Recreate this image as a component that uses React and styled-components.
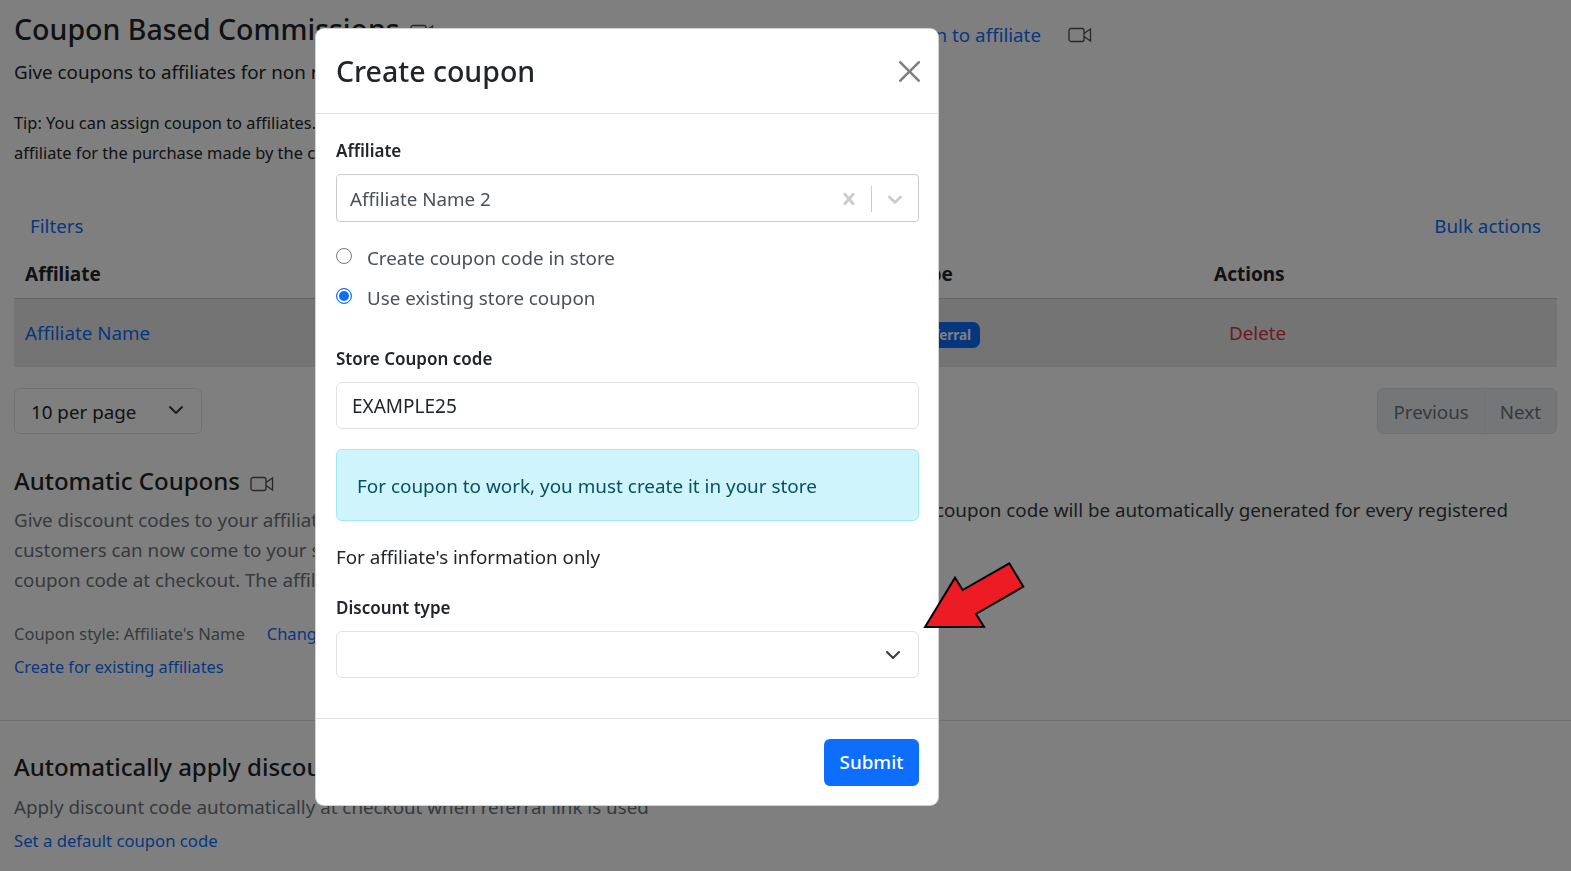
import React from "react";
import styled, { createGlobalStyle } from "styled-components";

const GlobalStyle = createGlobalStyle`
  html, body {
    margin: 0;
    padding: 0;
    height: 100%;
    background: #fff;
    overflow: hidden;
  }
  body {
    font-family: "Noto Sans", "Open Sans", sans-serif;
    font-size: 18.8px;
    line-height: 30px;
    color: #212529;
  }
  * { box-sizing: border-box; }
`;

const Page = styled.div`
  width: 1571px;
  height: 871px;
  padding: 9px 14px 0;
  overflow: hidden;
`;

const TopRow = styled.div`
  display: flex;
  justify-content: space-between;
  align-items: center;
  padding-right: 465px;
  height: 40px;
`;

const Title = styled.h1`
  display: flex;
  align-items: center;
  gap: 10px;
  margin: 0;
  font-weight: 500;
  font-size: ${(p) => p.$size || 28.5}px;
  line-height: 40px;
  white-space: nowrap;
  svg {
    margin-top: 6px;
  }
`;

const Link = styled.a`
  color: #0d6efd;
  white-space: nowrap;
  font-size: ${(p) => p.$size || 18.8}px;
`;

const LinkWithIcon = styled.div`
  display: flex;
  align-items: center;
  gap: 27px;
  margin-top: 11px;
`;

const Lead = styled.p`
  margin: 8px 0 0;
  white-space: nowrap;
`;

const Tip = styled.p`
  margin: 21px 0 0;
  font-size: 16.4px;
  white-space: nowrap;
`;

const TableActions = styled.div`
  display: flex;
  justify-content: space-between;
  padding: 0 16px;
  margin-top: 43px;
`;

const Table = styled.table`
  width: 100%;
  margin-top: 9px;
  border-collapse: collapse;
  table-layout: fixed;
`;

const Th = styled.th`
  text-align: left;
  font-weight: 700;
  height: 48px;
  padding: 0 11px;
  font-size: 19px;
  border-bottom: 1px solid #c9c9c9;
`;

const Td = styled.td`
  height: 68px;
  padding: 2px 11px 0;
  background: #e9e9e9;
  border-bottom: 1px solid #dee2e6;
`;

const Badge = styled.span`
  display: inline-block;
  margin-top: -1px;
  background: #0d6efd;
  color: #fff;
  font-size: 13.5px;
  font-weight: 700;
  line-height: 26px;
  padding: 0 9px;
  border-radius: 7px;
`;

const DeleteBtn = styled.a`
  color: #dc3545;
  padding-left: 15px;
`;

const PagerRow = styled.div`
  display: flex;
  justify-content: space-between;
  margin-top: 21px;
`;

const PerPage = styled.div`
  display: flex;
  align-items: center;
  justify-content: space-between;
  width: 188px;
  height: 46px;
  padding: 2px 17px 0 16px;
  border: 1px solid #dee2e6;
  border-radius: 6px;
  svg {
    margin-top: -4px;
  }
`;

const PagerGroup = styled.div`
  display: flex;
  height: 46px;
  padding-top: 2px;
  border: 1px solid #dee2e6;
  border-radius: 6px;
  background: #e9ecef;
  overflow: hidden;
`;

const PagerBtn = styled.div`
  display: flex;
  align-items: center;
  padding: 0 15px;
  color: #6c757d;
  & + & { border-left: 1px solid #dee2e6; }
`;

const Muted = styled.p`
  margin: ${(p) => p.$top || 4}px 0 0;
  color: #6c757d;
  white-space: nowrap;
`;

const Section = styled.section`
  margin-top: ${(p) => p.$top}px;
`;

const SplitRow = styled.div`
  display: flex;
`;

const SplitLeft = styled.div`
  flex: 0 0 700px;
`;

const SplitRight = styled.div`
  flex: 1;
  min-width: 0;
  display: flex;
  justify-content: flex-end;
  padding: 34px 49px 0 0;
  color: #343a40;
  white-space: nowrap;
`;

const MetaRow = styled.div`
  display: flex;
  gap: 22px;
  margin-top: 24px;
  font-size: 16.5px;
  line-height: 30px;
  color: #6c757d;
`;

const MetaLink = styled.div`
  margin-top: ${(p) => p.$top || 2}px;
  line-height: 30px;
`;

const Rule = styled.hr`
  border: 0;
  border-top: 1px solid #dee2e6;
  margin: 38px -14px 0;
`;

const Backdrop = styled.div`
  position: fixed;
  inset: 0;
  background: rgba(0, 0, 0, 0.5);
`;

const Modal = styled.div`
  position: fixed;
  left: 315px;
  top: 28px;
  width: 624px;
  height: 778px;
  display: flex;
  flex-direction: column;
  background: #fff;
  border: 1px solid rgba(0, 0, 0, 0.175);
  border-radius: 9px;
`;

const ModalHeader = styled.div`
  display: flex;
  align-items: center;
  justify-content: space-between;
  height: 85px;
  padding: 0 18px 0 20px;
  border-bottom: 1px solid #dee2e6;
`;

const ModalTitle = styled.h2`
  margin: 0;
  font-size: 28.5px;
  font-weight: 500;
  line-height: 40px;
`;

const ModalBody = styled.div`
  flex: 1;
  padding: 21px 19px 0 20px;
`;

const Label = styled.div`
  font-weight: 600;
  font-size: 17px;
  line-height: 32px;
  margin-top: ${(p) => p.$top || 0}px;
`;

const ComboBox = styled.div`
  display: flex;
  align-items: center;
  height: 48px;
  margin-top: 7px;
  padding: 1px 4px 0 13px;
  border: 1px solid #ccc;
  border-radius: 4px;
  color: #495057;
`;

const ComboValue = styled.div`
  flex: 1;
`;

const ComboSep = styled.span`
  width: 1px;
  height: 26px;
  margin: 0 11px 0 10px;
  background: #ccc;
`;

const ComboIcon = styled.svg`
  width: 24px;
  height: 24px;
  fill: #ccc;
  margin-right: ${(p) => p.$gap || 0}px;
`;

const RadioList = styled.div`
  display: flex;
  flex-direction: column;
  gap: 10px;
  margin-top: 21px;
`;

const RadioRow = styled.label`
  display: flex;
  align-items: center;
  gap: 15px;
  color: #495057;
`;

const Radio = styled.span`
  width: 16px;
  height: 16px;
  margin-top: -5px;
  border-radius: 50%;
  border: 1.5px solid ${(p) => (p.$on ? "#0d6efd" : "#7a7a7a")};
  background: ${(p) => (p.$on ? "#0d6efd" : "#fff")};
  box-shadow: ${(p) => (p.$on ? "inset 0 0 0 2px #fff" : "none")};
`;

const TextInput = styled.div`
  height: 47px;
  margin-top: 7px;
  padding: 0 15px;
  display: flex;
  align-items: center;
  font-size: 19px;
  border: 1px solid #dee2e6;
  border-radius: 6px;
`;

const Alert = styled.div`
  height: 72px;
  margin-top: 20px;
  padding: 2px 20px 0;
  display: flex;
  align-items: center;
  font-size: 18.9px;
  color: #055160;
  background: #cff4fc;
  border: 1px solid #9eeaf9;
  border-radius: 6px;
`;

const Note = styled.p`
  margin: 21px 0 0;
`;

const SelectBox = styled.div`
  display: flex;
  align-items: center;
  justify-content: flex-end;
  height: 47px;
  margin-top: 7px;
  padding: 0 17px;
  border: 1px solid #dee2e6;
  border-radius: 6px;
`;

const ModalFooter = styled.div`
  display: flex;
  justify-content: flex-end;
  align-items: center;
  height: 87px;
  padding: 0 19px 0 20px;
  border-top: 1px solid #dee2e6;
`;

const Submit = styled.button`
  width: 95px;
  height: 47px;
  border: 0;
  border-radius: 6px;
  background: #0d6efd;
  color: #fff;
  font: inherit;
  font-weight: 500;
`;

const Arrow = styled.svg`
  position: fixed;
  left: 920px;
  top: 558px;
  width: 110px;
  height: 75px;
`;

function VideoIcon() {
  return (
    <svg width="24" height="16" viewBox="0 0 24 16" fill="none" stroke="#495057" strokeWidth="1.3">
      <rect x="1" y="1.5" width="15" height="13" rx="2" />
      <path d="M16 6.5 L22.5 2 V14 L16 9.5" />
    </svg>
  );
}

function Chevron() {
  return (
    <svg width="16" height="16" viewBox="0 0 16 16" fill="none" stroke="#343a40" strokeWidth="2" strokeLinecap="round" strokeLinejoin="round">
      <path d="m2 5 6 6 6-6" />
    </svg>
  );
}

export default function App() {
  return (
    <>
      <GlobalStyle />
      <Page>
        <TopRow>
          <Title>
            Coupon Based Commissions <VideoIcon />
          </Title>
          <LinkWithIcon>
            <Link>Assign coupon to affiliate</Link>
            <VideoIcon />
          </LinkWithIcon>
        </TopRow>
        <Lead>Give coupons to affiliates for non referral sales</Lead>
        <Tip>
          Tip: You can assign coupon to affiliates. The commission is credited to the
          <br />
          affiliate for the purchase made by the customer using the coupon.
        </Tip>

        <TableActions>
          <Link>Filters</Link>
          <Link>Bulk actions</Link>
        </TableActions>
        <Table>
          <colgroup>
            <col style={{ width: 883 }} />
            <col style={{ width: 306 }} />
            <col />
          </colgroup>
          <thead>
            <tr>
              <Th>Affiliate</Th>
              <Th>Type</Th>
              <Th>Actions</Th>
            </tr>
          </thead>
          <tbody>
            <tr>
              <Td>
                <Link>Affiliate Name</Link>
              </Td>
              <Td>
                <Badge>Referral</Badge>
              </Td>
              <Td>
                <DeleteBtn>Delete</DeleteBtn>
              </Td>
            </tr>
          </tbody>
        </Table>

        <PagerRow>
          <PerPage>
            10 per page
            <Chevron />
          </PerPage>
          <PagerGroup>
            <PagerBtn>Previous</PagerBtn>
            <PagerBtn>Next</PagerBtn>
          </PagerGroup>
        </PagerRow>

        <Section $top={27}>
          <SplitRow>
            <SplitLeft>
              <Title $size={24}>
                Automatic Coupons <VideoIcon />
              </Title>
              <Muted>
                Give discount codes to your affiliates to share with them.
                <br />
                customers can now come to your store and apply the affiliate's
                <br />
                coupon code at checkout. The affiliate gets the commission.
              </Muted>
            </SplitLeft>
            <SplitRight>A unique coupon code will be automatically generated for every registered</SplitRight>
          </SplitRow>
          <MetaRow>
            <span>Coupon style: Affiliate's Name</span>
            <Link $size={16.5}>Change</Link>
          </MetaRow>
          <MetaLink>
            <Link $size={16.3}>Create for existing affiliates</Link>
          </MetaLink>
        </Section>

        <Rule />

        <Section $top={26}>
          <Title $size={24}>Automatically apply discount</Title>
          <Muted $top={5}>Apply discount code automatically at checkout when referral link is used</Muted>
          <MetaLink $top={3}>
            <Link $size={16.7}>Set a default coupon code</Link>
          </MetaLink>
        </Section>
      </Page>

      <Backdrop />

      <Modal>
        <ModalHeader>
          <ModalTitle>Create coupon</ModalTitle>
          <svg width="21" height="21" viewBox="0 0 16 16" fill="#7f7f7f">
            <path d="M.293.293a1 1 0 0 1 1.414 0L8 6.586 14.293.293a1 1 0 1 1 1.414 1.414L9.414 8l6.293 6.293a1 1 0 0 1-1.414 1.414L8 9.414l-6.293 6.293a1 1 0 0 1-1.414-1.414L6.586 8 .293 1.707a1 1 0 0 1 0-1.414z" />
          </svg>
        </ModalHeader>
        <ModalBody>
          <Label>Affiliate</Label>
          <ComboBox>
            <ComboValue>Affiliate Name 2</ComboValue>
            <ComboIcon viewBox="0 0 20 20">
              <path d="M14.348 14.849c-0.469 0.469-1.229 0.469-1.697 0l-2.651-3.030-2.651 3.029c-0.469 0.469-1.229 0.469-1.697 0-0.469-0.469-0.469-1.229 0-1.697l2.758-3.15-2.759-3.152c-0.469-0.469-0.469-1.228 0-1.697s1.228-0.469 1.697 0l2.652 3.031 2.651-3.031c0.469-0.469 1.228-0.469 1.697 0s0.469 1.229 0 1.697l-2.758 3.152 2.758 3.15c0.469 0.469 0.469 1.229 0 1.698z" />
            </ComboIcon>
            <ComboSep />
            <ComboIcon viewBox="0 0 20 20" $gap={7}>
              <path d="M4.516 7.548c0.436-0.446 1.043-0.481 1.576 0l3.908 3.747 3.908-3.747c0.533-0.481 1.141-0.446 1.576 0 0.436 0.445 0.408 1.197 0 1.615-0.406 0.418-4.695 4.502-4.695 4.502-0.217 0.223-0.502 0.335-0.789 0.335s-0.572-0.112-0.79-0.335c0 0-4.287-4.084-4.695-4.502s-0.436-1.17 0-1.615z" />
            </ComboIcon>
          </ComboBox>
          <RadioList>
            <RadioRow>
              <Radio />
              Create coupon code in store
            </RadioRow>
            <RadioRow>
              <Radio $on />
              Use existing store coupon
            </RadioRow>
          </RadioList>
          <Label $top={30}>Store Coupon code</Label>
          <TextInput>EXAMPLE25</TextInput>
          <Alert>For coupon to work, you must create it in your store</Alert>
          <Note>For affiliate's information only</Note>
          <Label $top={20}>Discount type</Label>
          <SelectBox>
            <Chevron />
          </SelectBox>
        </ModalBody>
        <ModalFooter>
          <Submit>Submit</Submit>
        </ModalFooter>
      </Modal>

      <Arrow viewBox="920 558 110 75">
        <polygon
          points="925,627 955,577.7 962.7,590 1009.3,563.3 1023.3,586.7 976,614 984,626.7"
          fill="#ed1c24"
          stroke="#000"
          strokeWidth="2"
        />
      </Arrow>
    </>
  );
}
